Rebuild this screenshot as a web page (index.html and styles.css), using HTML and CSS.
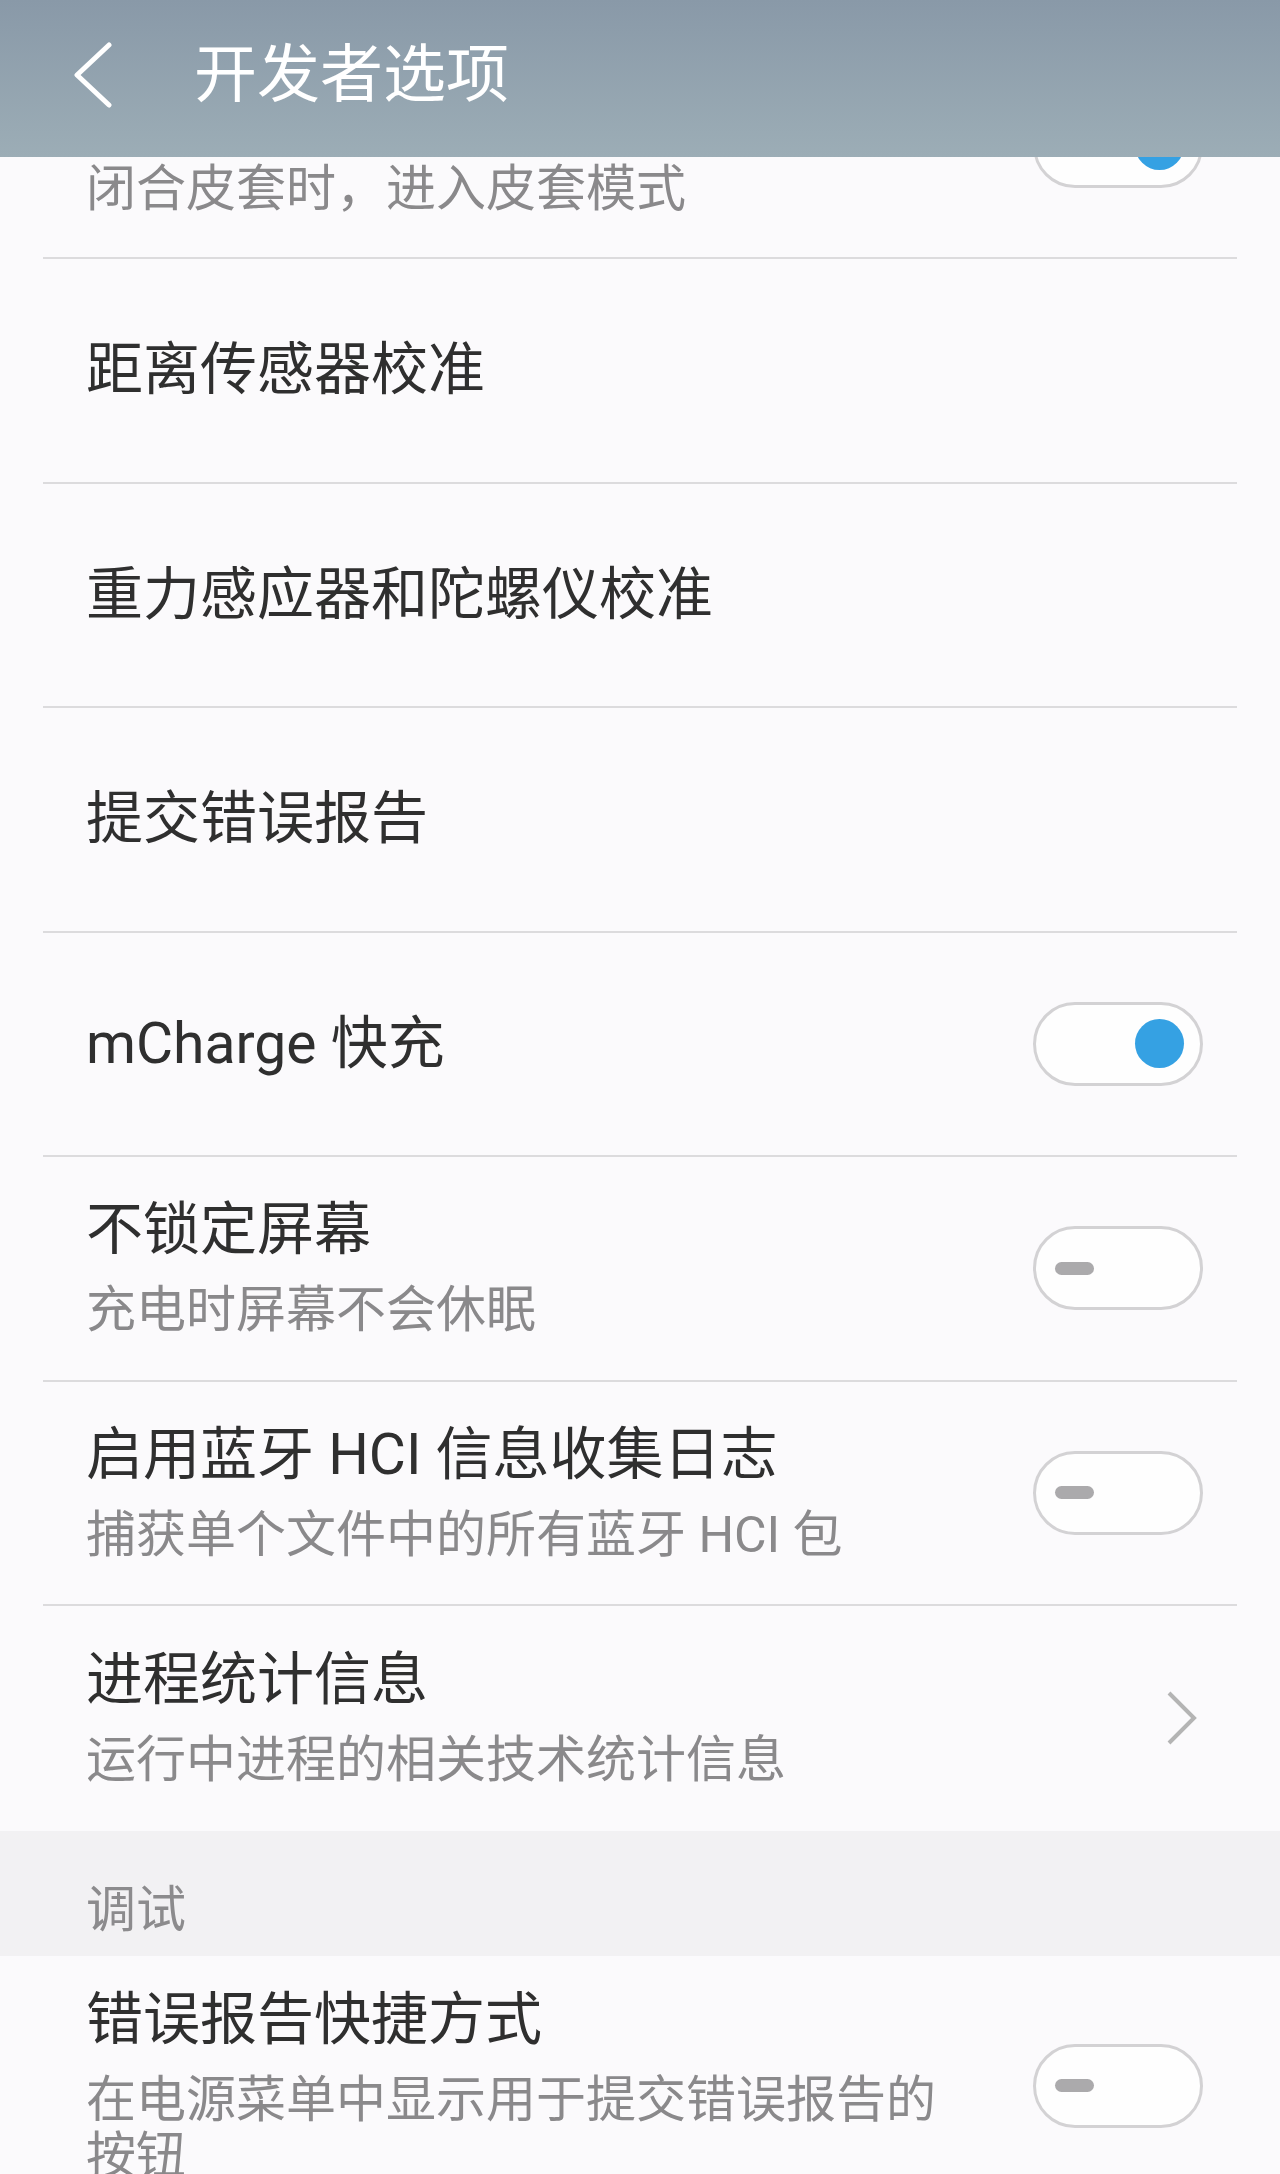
FILE: index.html
```html
<!DOCTYPE html>
<html lang="zh-CN">
<head>
    <meta charset="UTF-8">
    <meta name="viewport" content="width=device-width, initial-scale=1.0">
    <title>开发者选项</title>
    <link rel="stylesheet" href="styles.css">
</head>
<body>
    <header class="appbar">
        <svg class="back-icon" width="40" height="66" viewBox="0 0 40 66">
            <polyline points="36,3 4,33 36,63" fill="none" stroke="#ffffff" stroke-width="5" stroke-linecap="round" stroke-linejoin="round"/>
        </svg>
        <h1 class="appbar-title">开发者选项</h1>
    </header>

    <main class="list">
        <!-- first item is scrolled half under the app bar -->
        <div class="row scrolled">
            <div class="row-text">
                <div class="row-sub">闭合皮套时，进入皮套模式</div>
            </div>
            <span class="switch on"><span class="knob"></span></span>
        </div>
        <div class="row">
            <div class="row-text">
                <div class="row-title">距离传感器校准</div>
            </div>
        </div>
        <div class="row">
            <div class="row-text">
                <div class="row-title">重力感应器和陀螺仪校准</div>
            </div>
        </div>
        <div class="row">
            <div class="row-text">
                <div class="row-title">提交错误报告</div>
            </div>
        </div>
        <div class="row">
            <div class="row-text">
                <div class="row-title">mCharge 快充</div>
            </div>
            <span class="switch on"><span class="knob"></span></span>
        </div>
        <div class="row">
            <div class="row-text">
                <div class="row-title">不锁定屏幕</div>
                <div class="row-sub">充电时屏幕不会休眠</div>
            </div>
            <span class="switch"><span class="knob"></span></span>
        </div>
        <div class="row">
            <div class="row-text">
                <div class="row-title">启用蓝牙 HCI 信息收集日志</div>
                <div class="row-sub">捕获单个文件中的所有蓝牙 HCI 包</div>
            </div>
            <span class="switch"><span class="knob"></span></span>
        </div>
        <div class="row last">
            <div class="row-text">
                <div class="row-title">进程统计信息</div>
                <div class="row-sub">运行中进程的相关技术统计信息</div>
            </div>
            <svg class="chevron" width="30" height="54" viewBox="0 0 30 54">
                <polyline points="2,2 27,27 2,52" fill="none" stroke="#b4b4b4" stroke-width="4"/>
            </svg>
        </div>

        <div class="section-head">调试</div>

        <div class="row tall">
            <div class="row-text">
                <div class="row-title">错误报告快捷方式</div>
                <div class="row-sub">在电源菜单中显示用于提交错误报告的按钮</div>
            </div>
            <span class="switch"><span class="knob"></span></span>
        </div>
    </main>
</body>
</html>
```

FILE: styles.css
```css
body {
    margin: 0;
    padding: 0;
    background-color: #fbfafc;
    font-family: Roboto, "Noto Sans CJK SC", sans-serif;
    color: #2f2f2f;
}
.appbar {
    position: sticky;
    top: 0;
    z-index: 2;
    height: 157px;
    box-sizing: border-box;
    padding: 0 0 8px 73px;
    display: flex;
    align-items: center;
    background: linear-gradient(#8999a8, #9cadb6);
}
.back-icon {
    display: block;
    flex-shrink: 0;
}
.appbar-title {
    margin: 0 0 0 81px;
    font-size: 63px;
    font-weight: normal;
    line-height: 80px;
    color: #ffffff;
}
.list {
    margin-top: -122.5px;
}
.row {
    min-height: 224.5px;
    margin: 0 43px;
    padding: 0 34px 0 43px;
    box-sizing: border-box;
    display: flex;
    align-items: center;
    border-bottom: 2px solid #dcdbdd;
}
/* title of this item sits under the app bar, keep the subtitle where it would be */
.row.scrolled .row-text {
    padding-top: 86px;
}
.row.scrolled .row-sub {
    margin-top: 0;
}
.row.last {
    border-bottom: none;
}
.row.tall {
    padding-top: 32px;
    padding-bottom: 32px;
    border-bottom: none;
}
.row-text {
    flex: 1;
    min-width: 0;
}
.row-title {
    font-size: 57px;
    line-height: 64px;
}
.row-sub {
    margin-top: 20px;
    font-size: 50px;
    line-height: 56px;
    color: #8a898b;
}
.switch {
    flex-shrink: 0;
    margin-left: 60px;
    width: 170px;
    height: 84px;
    box-sizing: border-box;
    border: 3px solid #d3d2d4;
    border-radius: 42px;
    background-color: #fefefe;
    display: flex;
    align-items: center;
    padding: 0 16px 0 19px;
}
.switch .knob {
    width: 39px;
    height: 13px;
    border-radius: 7px;
    background-color: #abaaac;
}
.switch.on {
    justify-content: flex-end;
}
.switch.on .knob {
    width: 49px;
    height: 49px;
    border-radius: 50%;
    background-color: #35a1e3;
}
.chevron {
    display: block;
    flex-shrink: 0;
    margin-right: 6px;
}
.section-head {
    height: 125px;
    box-sizing: border-box;
    padding: 51px 0 0 86px;
    background-color: #f2f1f3;
    font-size: 50px;
    line-height: 56px;
    color: #8c8b8d;
}
```
